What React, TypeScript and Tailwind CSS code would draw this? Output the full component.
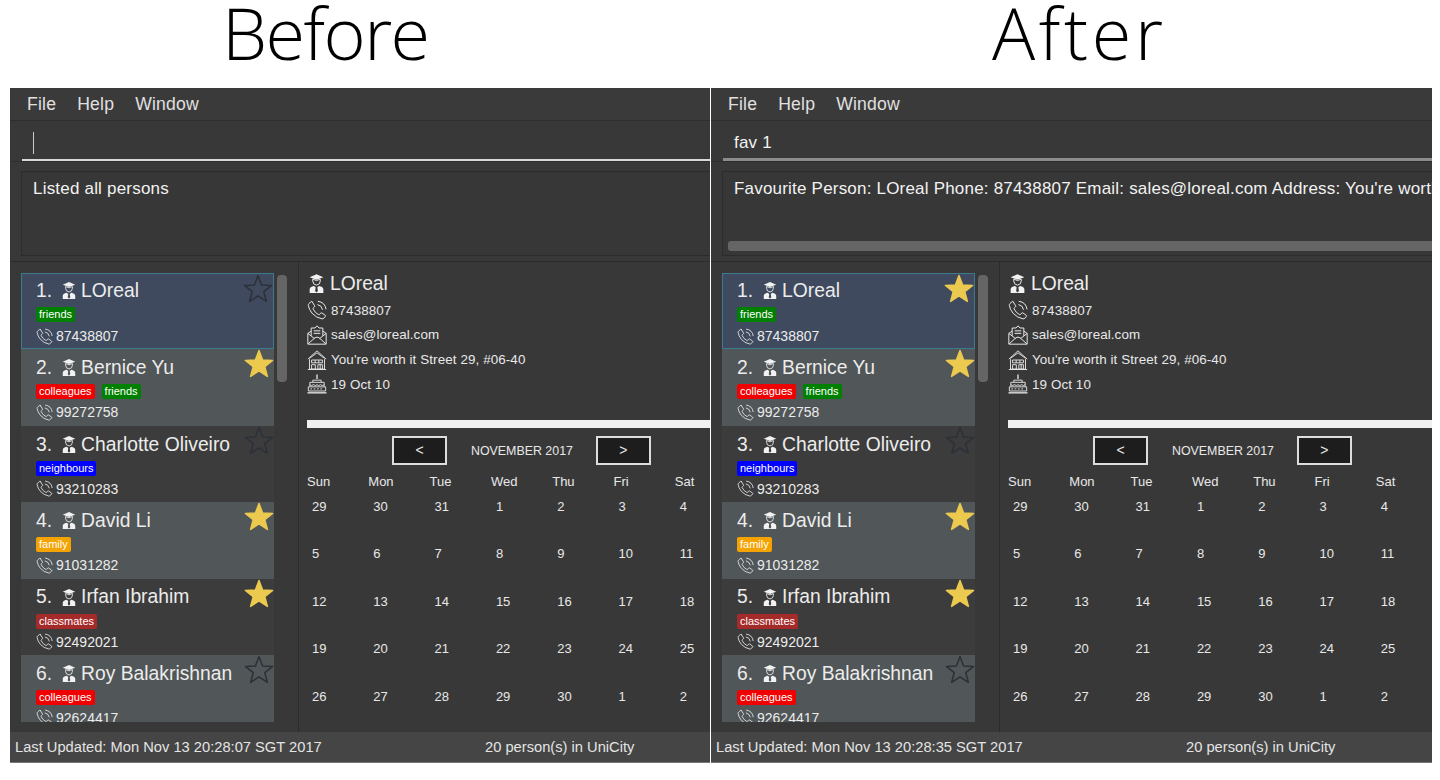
import React from "react";

type P = { name: string; tags: [string, string][]; phone: string; fav: boolean };

const FRIENDS: [string, string] = ["friends", "bg-[#008000]"];
const COLL: [string, string] = ["colleagues", "bg-[#f00000]"];
const NEIGH: [string, string] = ["neighbours", "bg-[#0000ff]"];
const FAM: [string, string] = ["family", "bg-[#f5a300]"];
const CLASS: [string, string] = ["classmates", "bg-[#a52a2a]"];

const people: P[] = [
  { name: "LOreal", tags: [FRIENDS], phone: "87438807", fav: false },
  { name: "Bernice Yu", tags: [COLL, FRIENDS], phone: "99272758", fav: true },
  { name: "Charlotte Oliveiro", tags: [NEIGH], phone: "93210283", fav: false },
  { name: "David Li", tags: [FAM], phone: "91031282", fav: true },
  { name: "Irfan Ibrahim", tags: [CLASS], phone: "92492021", fav: true },
  { name: "Roy Balakrishnan", tags: [COLL], phone: "92624417", fav: false },
];

const days = [
  29, 30, 31, 1, 2, 3, 4,
  5, 6, 7, 8, 9, 10, 11,
  12, 13, 14, 15, 16, 17, 18,
  19, 20, 21, 22, 23, 24, 25,
  26, 27, 28, 29, 30, 1, 2,
];

function PersonIcon({ className }: { className: string }) {
  return (
    <svg viewBox="0 0 24 30" className={className}>
      <path d="M12 0 L23 4.8 L12 9 L1 4.8 Z" fill="#f2f2f2" />
      <path d="M6 8 L12 10.3 L18 8 V11 Q18 16.8 12 17.6 Q6 16.8 6 11 Z" fill="none" stroke="#e8e8e8" strokeWidth="1.6" />
      <path d="M1 30 V24.6 Q1 20 8 18.8 L10.6 21 L9.8 27 L12 29.5 L14.2 27 L13.4 21 L16 18.8 Q23 20 23 24.6 V30 Z" fill="#f2f2f2" />
    </svg>
  );
}

function PhoneIcon({ className }: { className: string }) {
  return (
    <svg viewBox="0 0 24 24" className={className} fill="none" stroke="#e8e8e8" strokeWidth="1.2" strokeLinejoin="round" strokeLinecap="round">
      <path d="M6.2 2.2 L9.2 7 Q9.6 7.8 8.9 8.4 L7.3 9.8 Q7 10.2 7.3 10.9 Q9.8 15.6 13.9 17.6 Q14.5 17.9 15 17.4 L16.4 15.7 Q17 15.1 17.8 15.5 L22 18.4 Q22.6 18.9 22.1 19.6 L20.2 21.9 Q19.4 22.8 18 22.6 Q11 21.4 6.2 16 Q2.2 11.2 1.6 6.4 Q1.4 5 2.4 4.2 L5 2 Q5.8 1.6 6.2 2.2 Z" />
      <path d="M13 5.6 Q17.8 6.4 18.6 11.2" />
      <path d="M13.4 1.6 Q21.6 2.6 22.8 10.8" />
    </svg>
  );
}

function MailIcon({ className }: { className: string }) {
  return (
    <svg viewBox="0 0 24 24" className={className} fill="none" stroke="#e8e8e8" strokeWidth="1.2" strokeLinejoin="round">
      <path d="M1 10 V23 H23 V10 L19 7.4 M5 7.4 L1 10" />
      <path d="M5 13 V3.6 H9.6 L12 1 L14.4 3.6 H19 V13" />
      <path d="M8 7 H16 M8 10 H16" />
      <path d="M1 10 L9 16.4 M23 10 L15 16.4 M1.4 22.6 L9.4 15.4 Q12 13.6 14.6 15.4 L22.6 22.6" />
    </svg>
  );
}

function HomeIcon({ className }: { className: string }) {
  return (
    <svg viewBox="0 0 24 24" className={className} fill="none" stroke="#e8e8e8" strokeWidth="1.1" strokeLinejoin="round">
      <path d="M1 11 L12 1 L23 11" />
      <path d="M3 10 L12 3.4 L21 10" />
      <path d="M3 11 V23 H21 V11" />
      <path d="M1 23.4 H23" />
      <path d="M5.5 12 H18.5 V15.4 H5.5 Z M9.8 12 V15.4 M14.2 12 V15.4" />
      <path d="M5.5 17.6 H10 V23 H5.5 Z M13 17.6 H18.5 V23 H13 Z M15.8 17.6 V23" />
    </svg>
  );
}

function CakeIcon({ className }: { className: string }) {
  return (
    <svg viewBox="0 0 24 24" className={className} fill="none" stroke="#e8e8e8" strokeWidth="1.1" strokeLinejoin="round">
      <path d="M12 0.6 V6" strokeWidth="1.6" />
      <path d="M7 10 V7.4 H17 V10" />
      <path d="M3.4 15 V10 H20.6 V15" />
      <path d="M3.4 12.8 Q5.6 15 7.8 12.8 Q10 15 12 12.8 Q14 15 16.2 12.8 Q18.4 15 20.6 12.8" />
      <path d="M1.6 15.4 H22.4 V20.4 H1.6 Z" />
      <path d="M4 17.9 H6 M8 17.9 H10 M12 17.9 H14 M16 17.9 H18" />
      <path d="M0.6 22.6 H23.4" strokeWidth="1.6" />
    </svg>
  );
}

function Star({ filled }: { filled: boolean }) {
  return (
    <svg viewBox="0 0 30 29" className="h-[29px] w-[30px]">
      <path
        d="M15 1.5 L18.6 11 L28.6 11.4 L20.8 17.7 L23.4 27.4 L15 21.9 L6.6 27.4 L9.2 17.7 L1.4 11.4 L11.4 11 Z"
        fill={filled ? "#ecc94f" : "none"}
        stroke={filled ? "#ecc94f" : "#2c3038"}
        strokeWidth="1.5"
        strokeLinejoin="round"
      />
    </svg>
  );
}

function Card({ p, i, favFirst }: { p: P; i: number; favFirst: boolean }) {
  const selected = i === 0;
  const bg = selected
    ? "bg-[#3f4a5e] border border-[#3d7a90]"
    : i % 2 === 1
      ? "bg-[#515658]"
      : "bg-[#3c3c3c]";
  const filled = i === 0 ? favFirst : p.fav;
  return (
    <div className={`relative h-[76.4px] shrink-0 overflow-hidden ${bg}`}>
      <div className={`flex items-center text-[19.3px] leading-none text-[#ececec] ${selected ? "h-[33px] pl-[14px]" : "h-[35px] pl-[15px] pt-[2px]"}`}>
        <span>{i + 1}.</span>
        <PersonIcon className="ml-[10px] mr-[5px] h-[17px] w-[14px]" />
        <span>{p.name}</span>
      </div>
      <div className={`flex h-[15px] gap-[7px] ${selected ? "pl-[14px]" : "pl-[15px]"}`}>
        {p.tags.map(([t, c]) => (
          <span key={t} className={`flex h-[15px] items-center rounded-[2px] px-[3px] text-[11px] leading-none text-white ${c}`}>
            {t}
          </span>
        ))}
      </div>
      <div className={`flex items-center text-[14px] leading-[18px] text-[#ececec] ${selected ? "mt-[5px] pl-[14px]" : "mt-[4px] pl-[15px]"}`}>
        <PhoneIcon className="mr-[3px] h-[17px] w-[17px]" />
        <span>{p.phone}</span>
      </div>
      <div className="absolute right-0 top-0">
        <Star filled={filled} />
      </div>
    </div>
  );
}

function DetailRow({ icon, text }: { icon: React.ReactNode; text: string }) {
  return (
    <div className="flex h-[24.7px] items-center text-[13.4px] leading-none tracking-[0.1px] text-[#e8e8e8]">
      {icon}
      <span className="ml-[4px]">{text}</span>
    </div>
  );
}

function Screen({
  width,
  command,
  result,
  time,
  favFirst,
}: {
  width: string;
  command: string;
  result: string;
  time: string;
  favFirst: boolean;
}) {
  const long = result.length > 30;
  return (
    <div className={`flex h-[675px] shrink-0 flex-col overflow-hidden bg-[#383838] text-[#f0f0f0] ${width}`}>
      <div className="flex h-[33px] shrink-0 items-center gap-[21px] border-b border-[#2e2e2e] bg-[#3a3a3a] pl-[17px] pt-[2px] text-[17.6px] leading-none tracking-[0.2px] text-[#e0e0e0]">
        <span>File</span>
        <span>Help</span>
        <span>Window</span>
      </div>
      <div className={`ml-[12px] flex h-[40px] w-[1400px] shrink-0 items-center pl-[11px] pt-[6px] text-[17px] leading-none tracking-[0.2px] text-[#f2f2f2] ${long ? "border-b-[3px] border-[#8c8c8c]" : "border-b-2 border-[#d8d8d8]"}`}>
        {command ? <span>{command}</span> : <span className="h-[22px] w-px bg-[#cccccc]" />}
      </div>
      <div className="h-[10px] shrink-0 border-t border-[#2e2e2e]" />
      <div className="ml-[11px] flex h-[85px] w-[1400px] shrink-0 flex-col border border-[#2c2c2c] bg-[#373737] pl-[11px] pt-[8px]">
        <div className="whitespace-nowrap text-[17px] leading-[18px] tracking-[0.2px] text-[#f2f2f2]">{result}</div>
        {long && <div className="mt-[43px] h-[10px] w-full -ml-[6px] rounded-[3px] bg-[#656565]" />}
      </div>
      <div className="h-[6px] shrink-0 border-b border-[#2c2c2c]" />
      <div className="flex min-h-0 flex-1">
        <div className="flex w-[289px] shrink-0 border-r border-[#2c2c2c] pl-[11px] pt-[11px] pb-[10px]">
          <div className="flex w-[253px] shrink-0 flex-col overflow-hidden">
            {people.map((p, i) => (
              <Card key={p.name} p={p} i={i} favFirst={favFirst} />
            ))}
          </div>
          <div className="ml-[3px] mt-[2px] h-[107px] w-[10px] rounded-[4px] bg-[#656565]" />
        </div>
        <div className="min-w-0 flex-1 pl-[8px] pt-[8px]">
          <div className="flex h-[27px] items-center text-[19.3px] leading-none text-[#ececec]">
            <PersonIcon className="ml-[2px] mr-[6px] h-[19px] w-[15px]" />
            <span>LOreal</span>
          </div>
          <div className="pt-[1px]">
            <DetailRow icon={<PhoneIcon className="h-[20px] w-[20px]" />} text="87438807" />
            <DetailRow icon={<MailIcon className="h-[20px] w-[20px]" />} text="sales@loreal.com" />
            <DetailRow icon={<HomeIcon className="h-[20px] w-[20px]" />} text="You're worth it Street 29, #06-40" />
            <DetailRow icon={<CakeIcon className="h-[20px] w-[20px]" />} text="19 Oct 10" />
          </div>
          <div className="mt-[23px] h-[8px] w-[1400px] bg-[#f0f0f0]" />
          <div className="mt-[8px] flex w-[344px] items-center pl-[85px] text-[12.4px] leading-none text-[#e8e8e8]">
            <span className="flex h-[29px] w-[55px] shrink-0 items-center justify-center border-2 border-[#dddddd] bg-[#1d1d1d] text-[14px]">&lt;</span>
            <span className="ml-[24px] mr-[23px] whitespace-nowrap pt-[2px]">NOVEMBER 2017</span>
            <span className="flex h-[29px] w-[55px] shrink-0 items-center justify-center border-2 border-[#dddddd] bg-[#1d1d1d] text-[14px]">&gt;</span>
          </div>
          <div className="mt-[8px] grid w-[430px] grid-cols-[repeat(7,61.3px)] text-[13px] leading-[18px] text-[#e8e8e8]">
            {["Sun", "Mon", "Tue", "Wed", "Thu", "Fri", "Sat"].map((d) => (
              <div key={d} className="h-[25px]">{d}</div>
            ))}
            {days.map((d, i) => (
              <div key={i} className="h-[47.5px] pl-[5px]">{d}</div>
            ))}
          </div>
        </div>
      </div>
      <div className="flex h-[30px] shrink-0 items-center bg-[#454545] pl-[5px] text-[14.7px] leading-none text-[#e4e4e4]">
        <span className="w-[470px] shrink-0 whitespace-nowrap">Last Updated: {time}</span>
        <span className="whitespace-nowrap">20 person(s) in UniCity</span>
      </div>
      <div className="h-[1px] shrink-0 bg-[#777777]" />
    </div>
  );
}

export default function App() {
  return (
    <div className="flex h-[780px] w-[1440px] flex-col overflow-hidden bg-white font-['Liberation_Sans',sans-serif]">
      <div className="flex h-[88px] shrink-0 font-['Open_Sans',sans-serif] text-[72px] font-[360] leading-[64px] text-black">
        <div className="w-[711px] pl-[222px] tracking-[-1.6px]">Before</div>
        <div className="pl-[281px] tracking-[3.6px]">After</div>
      </div>
      <div className="flex gap-[1px] pl-[10px]">
        <Screen
          width="w-[700px]"
          command=""
          result="Listed all persons"
          time="Mon Nov 13 20:28:07 SGT 2017"
          favFirst={false}
        />
        <Screen
          width="w-[721px]"
          command="fav 1"
          result="Favourite Person: LOreal Phone: 87438807 Email: sales@loreal.com Address: You're worth it Street 29, #06-40"
          time="Mon Nov 13 20:28:35 SGT 2017"
          favFirst={true}
        />
      </div>
    </div>
  );
}
